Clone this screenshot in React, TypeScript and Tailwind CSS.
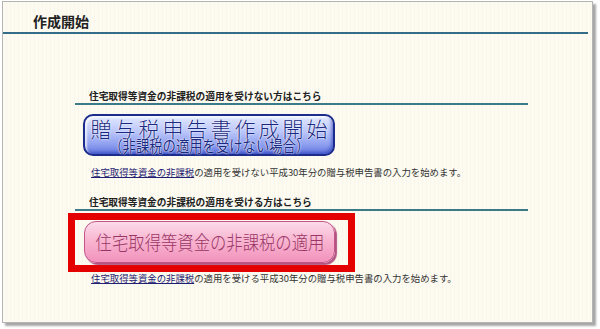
import React from "react";

const jp = { fontFamily: '"Noto Sans CJK JP", "Noto Sans", sans-serif' };

export default function App() {
  return (
    <div className="w-[600px] h-[329px] bg-white overflow-hidden" style={jp}>
      <div className="ml-[2px] mt-[1px] w-[591px] h-[322px] border border-[#b4b4b4] bg-[#fcfaef] bg-[repeating-linear-gradient(90deg,#fdfbf1_0px,#fdfbf1_3px,#f9f6ea_3px,#f9f6ea_4px)] shadow-[3px_3px_2px_rgba(0,0,0,0.35)] flex flex-col">
        <div className="h-[30px] pl-[30px] pt-[12px] text-[14px] leading-[14px] font-bold text-[#222]">作成開始</div>
        <div className="h-[2px] mr-[4px] bg-[#356d88]" />

        <div className="mt-[56px] ml-[72px] w-[453px] border-b-2 border-[#3b7a86] pl-[14px] pb-[1px] text-[9.7px] leading-[12px] font-bold text-[#222]">
          住宅取得等資金の非課税の適用を受けない方はこちら
        </div>

        <div className="mt-[9px] ml-[80px] w-[252px] h-[42px] rounded-[10px] border-2 border-[#1b2c8c] bg-[linear-gradient(180deg,#e2e8ff_0%,#bcc7fb_40%,#8e9ff0_75%,#6275de_100%)] shadow-[inset_2px_2px_2px_rgba(255,255,255,0.7),inset_-2px_-2px_3px_rgba(40,60,180,0.5)] flex flex-col items-center justify-center text-[#1a2a80] [text-shadow:0_0_2px_#fff,0_0_1px_#fff]">
          <div className="text-[21px] leading-[20px] font-light tracking-[3px] pl-[3px] whitespace-nowrap">贈与税申告書作成開始</div>
          <div className="text-[15.5px] leading-[15px] scale-x-[0.86] whitespace-nowrap">（非課税の適用を受けない場合）</div>
        </div>

        <div className="mt-[10px] ml-[88px] text-[9.4px] leading-[12px] text-[#333] whitespace-nowrap">
          <span className="text-[#1e2070] underline">住宅取得等資金の非課税</span>の適用を受けない平成30年分の贈与税申告書の入力を始めます。
        </div>

        <div className="mt-[18px] ml-[72px] w-[453px] border-b-2 border-[#3b7a86] pl-[14px] pb-[1px] text-[9.7px] leading-[12px] font-bold text-[#222]">
          住宅取得等資金の非課税の適用を受ける方はこちら
        </div>

        <div className="mt-[2px] ml-[65px] w-[287px] h-[59px] border-[7px] border-[#e50000] pl-[9px] pt-[1px]">
          <div className="w-[251px] h-[42px] rounded-[12px] border-[1.5px] border-[#c2548a] bg-[linear-gradient(180deg,#fcdbe9_0%,#f8b6d1_45%,#f292bc_100%)] shadow-[2px_2px_1px_#b25482] flex items-center justify-center">
            <span className="text-[19px] leading-[20px] font-light text-[#9a3666] scale-x-[0.86] whitespace-nowrap">住宅取得等資金の非課税の適用</span>
          </div>
        </div>

        <div className="ml-[88px] text-[9.4px] leading-[12px] text-[#333] whitespace-nowrap">
          <span className="text-[#1e2070] underline">住宅取得等資金の非課税</span>の適用を受ける平成30年分の贈与税申告書の入力を始めます。
        </div>
      </div>
    </div>
  );
}
